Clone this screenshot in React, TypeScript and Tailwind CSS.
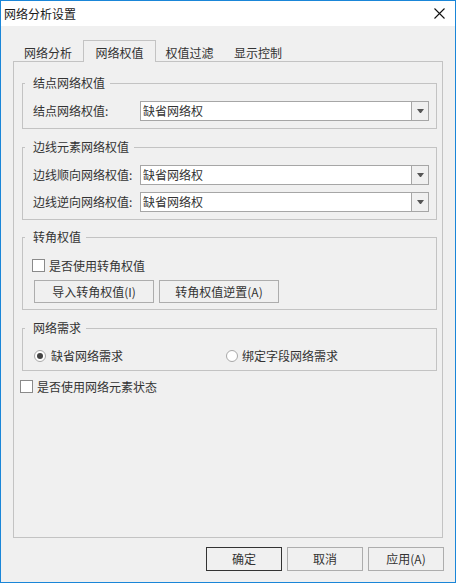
import React from "react";

const Combo = ({ text }: { text: string }) => (
  <div className="flex h-[20px] w-[289px] border border-[#a6a6a6] bg-white">
    <div className="flex-1 pl-[2px] leading-[18px]">{text}</div>
    <div className="flex w-[17px] items-center justify-center border-l border-[#a6a6a6] bg-[#f0f0f0]">
      <svg width="7" height="4" viewBox="0 0 7 4">
        <polygon points="0,0 7,0 4,4 3,4" fill="#555" />
      </svg>
    </div>
  </div>
);

const Group = ({
  title,
  className,
  children,
}: {
  title: string;
  className: string;
  children: React.ReactNode;
}) => (
  <div className={`relative ml-[8px] w-[415px] border border-[#c3c3c3] ${className}`}>
    <span className="absolute left-[2px] top-[-9px] bg-[#f0f0f0] pl-[8px] pr-[5px] leading-[16px]">
      {title}
    </span>
    {children}
  </div>
);

const Check = () => (
  <div className="h-[13px] w-[13px] border border-[#8a8a8a] bg-white" />
);

export default function App() {
  return (
    <div className="flex h-[583px] w-[456px] flex-col border border-[#1a86d8] bg-[#f0f0f0] font-['Noto_Sans_CJK_SC','Noto_Sans',sans-serif] text-[12px] leading-[16px] text-[#333]">
      {/* title bar */}
      <div className="flex h-[25px] items-center justify-between bg-white pl-[3px] pr-[10px] text-[#1a1a1a]">
        <span>网络分析设置</span>
        <svg width="11" height="11" viewBox="0 0 11 11">
          <path d="M0.5 0.5 L10.5 10.5 M10.5 0.5 L0.5 10.5" stroke="#111" strokeWidth="1.1" />
        </svg>
      </div>

      {/* tabs */}
      <div className="ml-[12px] mt-[14px] flex h-[21px] items-end">
        <div className="flex h-[19px] w-[70px] justify-center pt-[3px]">网络分析</div>
        <div className="relative z-10 mb-[-1px] flex h-[22px] w-[73px] justify-center border-x border-t border-[#c3c3c3] bg-[#f0f0f0] pt-[4px]">
          网络权值
        </div>
        <div className="flex h-[19px] w-[67px] justify-center pt-[3px]">权值过滤</div>
        <div className="flex h-[19px] w-[70px] justify-center pt-[3px]">显示控制</div>
      </div>

      {/* panel */}
      <div className="ml-[12px] flex h-[477px] w-[430px] flex-col border border-[#c3c3c3]">
        <Group title="结点网络权值" className="mt-[21px] pb-[7px] pl-[10px] pt-[17px]">
          <div className="flex items-center">
            <span className="w-[107px]">结点网络权值:</span>
            <Combo text="缺省网络权" />
          </div>
        </Group>

        <Group title="边线元素网络权值" className="mt-[18px] flex flex-col gap-[7px] pb-[7px] pl-[10px] pt-[17px]">
          <div className="flex items-center">
            <span className="w-[107px]">边线顺向网络权值:</span>
            <Combo text="缺省网络权" />
          </div>
          <div className="flex items-center">
            <span className="w-[107px]">边线逆向网络权值:</span>
            <Combo text="缺省网络权" />
          </div>
        </Group>

        <Group title="转角权值" className="mt-[17px] pb-[6px] pt-[21px]">
          <div className="ml-[9px] flex items-center gap-[4px]">
            <Check />
            <span className="leading-[13px]">是否使用转角权值</span>
          </div>
          <div className="ml-[11px] mt-[8px] flex gap-[5px]">
            <div className="flex h-[23px] w-[120px] items-center justify-center border border-[#adadad] bg-[#f0f0f0]">
              导入转角权值(I)
            </div>
            <div className="flex h-[23px] w-[120px] items-center justify-center border border-[#adadad] bg-[#f0f0f0]">
              转角权值逆置(A)
            </div>
          </div>
        </Group>

        <Group title="网络需求" className="mt-[18px] pb-[8px] pt-[21px]">
          <div className="ml-[11px] flex items-center">
            <div className="flex w-[192px] items-center gap-[5px]">
              <div className="flex h-[12px] w-[12px] items-center justify-center rounded-full border border-[#a8a8a8] bg-white">
                <div className="h-[6px] w-[6px] rounded-full bg-[#444]" />
              </div>
              <span className="leading-[12px]">缺省网络需求</span>
            </div>
            <div className="flex items-center gap-[4px]">
              <div className="h-[12px] w-[12px] rounded-full border border-[#a8a8a8] bg-white" />
              <span className="leading-[12px]">绑定字段网络需求</span>
            </div>
          </div>
        </Group>

        <div className="ml-[6px] mt-[9px] flex items-center gap-[4px]">
          <Check />
          <span className="leading-[13px]">是否使用网络元素状态</span>
        </div>
      </div>

      {/* bottom buttons */}
      <div className="mt-[9px] flex justify-end gap-[5px] pr-[11px]">
        <div className="flex h-[24px] w-[76px] items-center justify-center border border-[#333] bg-[#f0f0f0]">
          确定
        </div>
        <div className="flex h-[24px] w-[76px] items-center justify-center border border-[#adadad] bg-[#f0f0f0]">
          取消
        </div>
        <div className="flex h-[24px] w-[76px] items-center justify-center border border-[#adadad] bg-[#f0f0f0]">
          应用(A)
        </div>
      </div>
    </div>
  );
}
